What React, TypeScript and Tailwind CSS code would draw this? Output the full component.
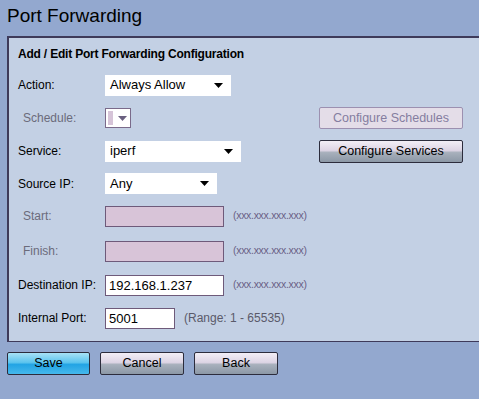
const font = "font-['Liberation_Sans',Arial,sans-serif]";

const Arrow = ({ dim }: { dim?: boolean }) => (
  <svg width="9" height="5" viewBox="0 0 9 5" className="shrink-0">
    <path d="M0 0 H9 L4.5 5 Z" fill={dim ? "#6a6080" : "#000"} />
  </svg>
);

const Select = ({ value, w }: { value: string; w: string }) => (
  <div className={`${w} h-[21px] bg-white flex items-center justify-between pl-[5px] pr-[8px] text-[13px] text-black`}>
    <span>{value}</span>
    <Arrow />
  </div>
);

const Label = ({ text, dim }: { text: string; dim?: boolean }) => (
  <div className={`w-[87px] shrink-0 text-[12px] ${dim ? "pl-[5px] text-[#6b6b7b]" : "text-black"}`}>{text}</div>
);

const Hint = ({ text }: { text: string }) => (
  <span className="ml-[9px] text-[10.5px] text-[#6a5f86] tracking-[-0.3px]">{text}</span>
);

const Btn = ({ text, w, blue }: { text: string; w: string; blue?: boolean }) => (
  <div
    className={`${w} h-[23px] rounded-[2px] border border-[#2c2c3c] flex items-center justify-center text-[12.5px] text-black ${
      blue
        ? "bg-[linear-gradient(#a8e2f6_0%,#5cc4ee_45%,#22a4e4_55%,#46b8ec_100%)]"
        : "bg-[linear-gradient(#f2eef6_0%,#ddd4e4_45%,#a8b0bc_55%,#8c98a6_100%)]"
    }`}
  >
    {text}
  </div>
);

export default function App() {
  return (
    <div className={`w-[479px] h-[399px] bg-[#93a8cf] overflow-hidden ${font}`}>
      <div className="pl-[7px] pt-[3px] h-[36px] text-[19px] leading-[26px] text-black">Port Forwarding</div>
      <div className="ml-[7px] w-[480px] h-[306px] bg-[#c3d0e4] border-l-2 border-t-2 border-b border-[#3e3a5a] pl-[9px]">
        <div className="pt-[7px] h-[36px] text-[12px] font-bold text-black tracking-[-0.2px]">Add / Edit Port Forwarding Configuration</div>
        <div className="flex items-center h-[22px]">
          <Label text="Action:" />
          <Select value="Always Allow" w="w-[126px]" />
        </div>
        <div className="flex items-center h-[22px] mt-[11px]">
          <Label text="Schedule:" dim />
          <div className="w-[26px] h-[20px] border border-[#7a6a8a] bg-white flex items-center gap-[5px] pl-[2px]">
            <div className="w-[5px] h-[14px] bg-[#d6c4d8]" />
            <Arrow dim />
          </div>
          <div className="ml-[188px] w-[144px] h-[22px] border border-[#9c90b0] rounded-[2px] bg-[#e4dde8] flex items-center justify-center text-[12.5px] text-[#857ea0]">
            Configure Schedules
          </div>
        </div>
        <div className="flex items-center h-[22px] mt-[11px]">
          <Label text="Service:" />
          <Select value="iperf" w="w-[136px]" />
          <div className="ml-[78px]">
            <Btn text="Configure Services" w="w-[144px]" />
          </div>
        </div>
        <div className="flex items-center h-[21px] mt-[11px]">
          <Label text="Source IP:" />
          <Select value="Any" w="w-[112px]" />
        </div>
        <div className="flex items-center h-[22px] mt-[11px]">
          <Label text="Start:" dim />
          <div className="w-[119px] h-[21px] border border-[#6e5a7a] bg-[#d8c4d8]" />
          <Hint text="(xxx.xxx.xxx.xxx)" />
        </div>
        <div className="flex items-center h-[22px] mt-[13px]">
          <Label text="Finish:" dim />
          <div className="w-[119px] h-[21px] border border-[#6e5a7a] bg-[#d8c4d8]" />
          <Hint text="(xxx.xxx.xxx.xxx)" />
        </div>
        <div className="flex items-center h-[22px] mt-[12px]">
          <Label text="Destination IP:" />
          <div className="w-[119px] h-[21px] border border-[#6e5a7a] bg-white text-[13px] text-black pl-[3px] leading-[19px]">192.168.1.237</div>
          <Hint text="(xxx.xxx.xxx.xxx)" />
        </div>
        <div className="flex items-center h-[22px] mt-[11px]">
          <Label text="Internal Port:" />
          <div className="w-[70px] h-[21px] border border-[#6e5a7a] bg-white text-[13px] text-black pl-[3px] leading-[19px]">5001</div>
          <span className="ml-[9px] text-[12px] text-[#5a5a6a]">(Range: 1 - 65535)</span>
        </div>
      </div>
      <div className="flex gap-[10px] pl-[7px] mt-[10px]">
        <Btn text="Save" w="w-[83px]" blue />
        <Btn text="Cancel" w="w-[84px]" />
        <Btn text="Back" w="w-[84px]" />
      </div>
    </div>
  );
}
